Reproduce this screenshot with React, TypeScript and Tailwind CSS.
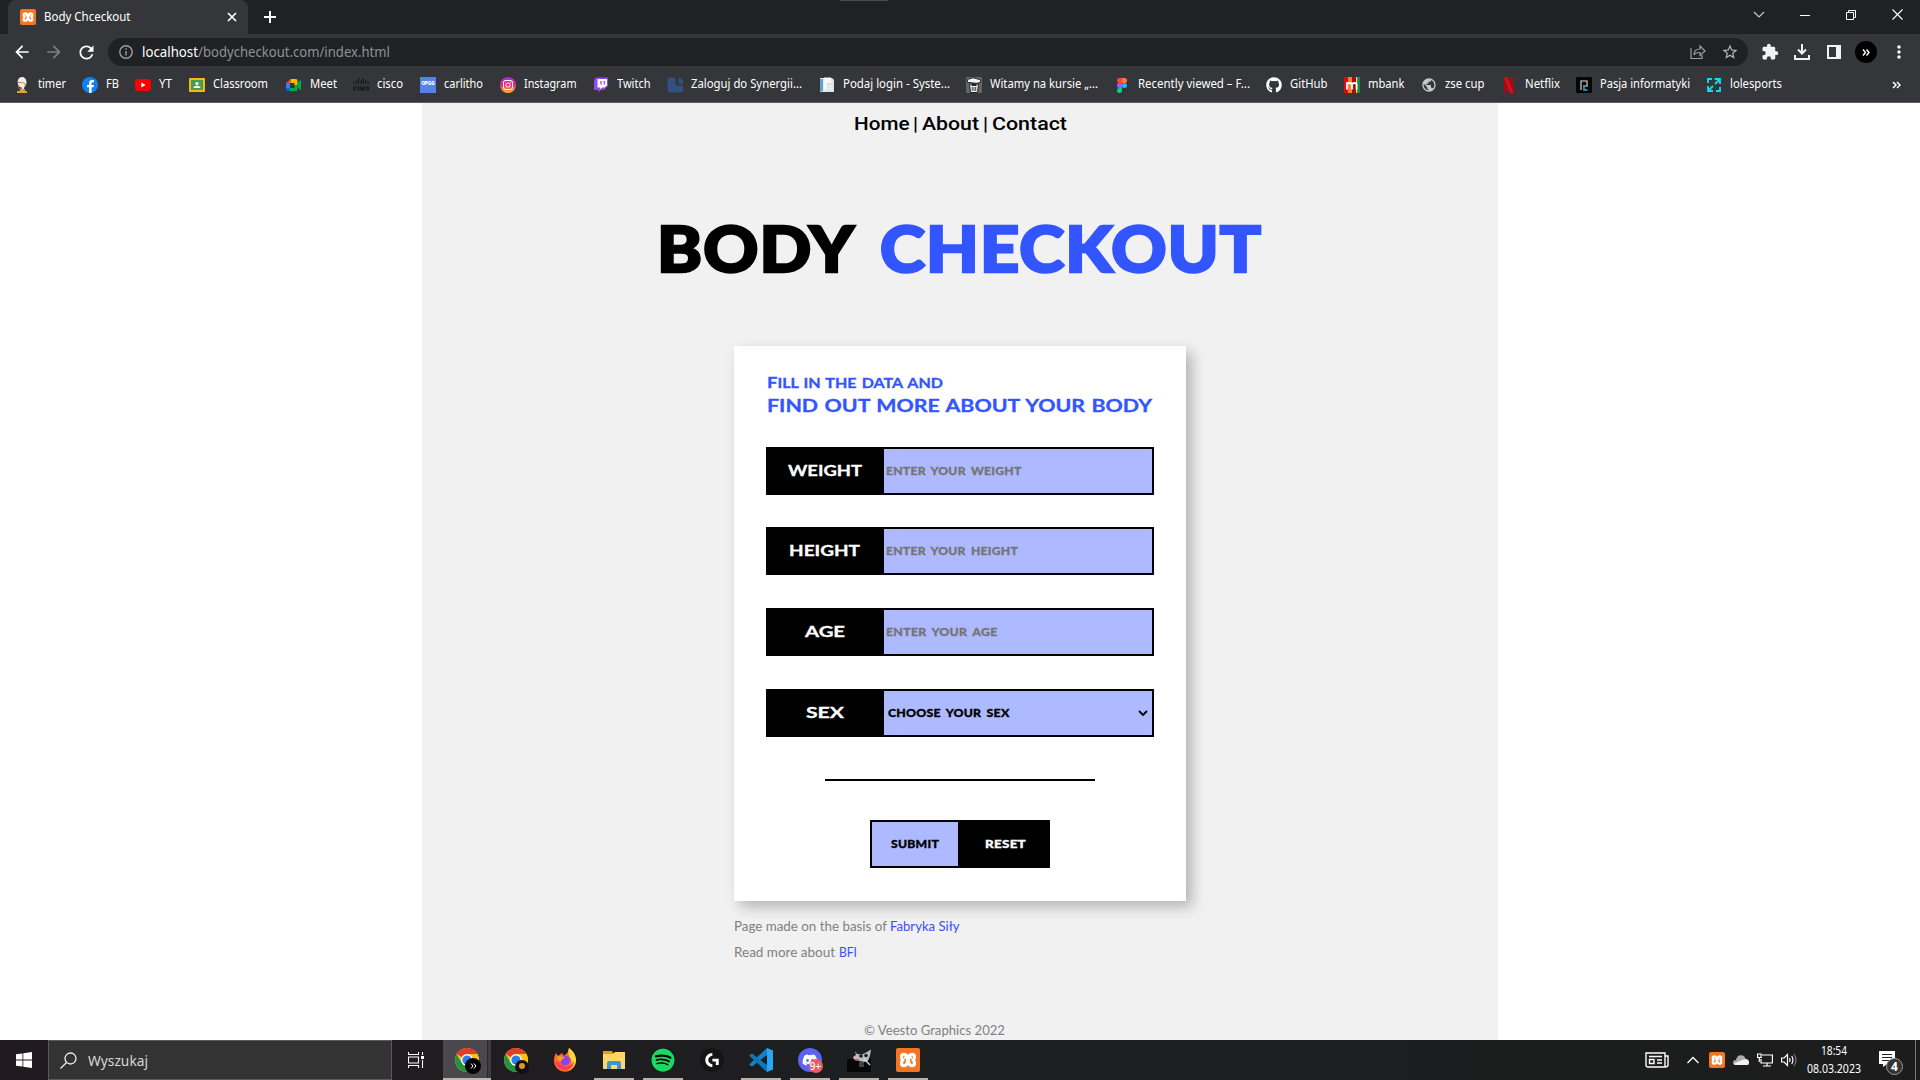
import { useLayoutEffect, useRef, useState, type ReactNode } from "react";
import { SiLogitechg, SiInstagram } from "react-icons/si";
import { FaSpotify, FaDiscord, FaGithub, FaFacebookF } from "react-icons/fa";
import { MdExtension, MdPublic, MdStarBorder, MdRefresh, MdArrowBack, MdArrowForward, MdMoreVert } from "react-icons/md";

/* Single line of text stretched to an exact width. */
function Fit({ w, className = "", children }: { w: number; className?: string; children: ReactNode }) {
  const ref = useRef<HTMLSpanElement>(null);
  const [scale, setScale] = useState(1);
  useLayoutEffect(() => {
    if (ref.current) setScale(w / (ref.current.getBoundingClientRect().width || w));
  }, []);
  return (
    <span className={`inline-block shrink-0 whitespace-pre text-left ${className}`} style={{ width: w }}>
      <span ref={ref} className="inline-block origin-left" style={{ transform: `scaleX(${scale})` }}>
        {children}
      </span>
    </span>
  );
}

const UI = "font-['Noto_Sans','Open_Sans',sans-serif]";
const HEAVY = "font-['Lato',sans-serif] font-black";
const PLATE = "font-['Lato',sans-serif] font-bold [word-spacing:1px] [-webkit-text-stroke:0.3px]";
const FIELD = "text-[11.500px] tracking-[0.2px] [word-spacing:2px] [-webkit-text-stroke:0.3px]";

function Xampp({ size }: { size: number }) {
  return (
    <span className="flex items-center justify-center rounded-[2px] bg-[#f37623]" style={{ width: size, height: size }}>
      <svg viewBox="0 0 24 24" width={size} height={size} fill="none" stroke="#fff" strokeWidth="3.200" strokeLinejoin="round" strokeLinecap="round">
        <path d="M10 9.500h-.5M14 9.500h.5M12 12 10.600 8Q10 6.300 8 6.300 5.500 6.300 5.500 9 5.500 11 7 12 5.500 13 5.500 15 5.500 17.700 8 17.700 10 17.700 10.600 16L13.400 8Q14 6.300 16 6.300 18.500 6.300 18.500 9 18.500 11 17 12 18.500 13 18.500 15 18.500 17.700 16 17.700 14 17.700 13.400 16Z" />
      </svg>
    </span>
  );
}

function Chrome() {
  return (
    <svg viewBox="0 0 24 24" width="24" height="24">
      <circle cx="12" cy="12" r="12" fill="#fbc116" />
      <path d="M12 12 L1.610 6 A12 12 0 0 1 22.400 6 L12 6Z" fill="#e33b2e" />
      <path d="M1.610 6 A12 12 0 0 0 12 24 L17.200 15 L6.800 15Z" fill="#229342" />
      <path d="M12 6.500H22.600A12 12 0 0 1 12 24L17.200 15Z" fill="#fbc116" />
      <circle cx="12" cy="12" r="5.900" fill="#fff" />
      <circle cx="12" cy="12" r="4.600" fill="#2b7de9" />
    </svg>
  );
}

function Figma() {
  return (
    <svg viewBox="0 0 16 16" width="16" height="16">
      <path d="M8 1H5.500a2.500 2.500 0 0 0 0 5H8Z" fill="#f24e1e" />
      <path d="M8 1h2.500a2.500 2.500 0 0 1 0 5H8Z" fill="#ff7262" />
      <path d="M8 6H5.500a2.500 2.500 0 0 0 0 5H8Z" fill="#a259ff" />
      <circle cx="10.500" cy="8.500" r="2.500" fill="#1abcfe" />
      <path d="M8 11H5.500A2.500 2.500 0 1 0 8 13.500Z" fill="#0acf83" />
    </svg>
  );
}

const S = ({ children }: { children: ReactNode }) => (
  <svg viewBox="0 0 16 16" width="16" height="16" fill="none">{children}</svg>
);

/* icon, label, label width, width of the space up to the next icon */
const bookmarks: [ReactNode, string, number, number][] = [
  [<S><path d="M8 0C5 0 3.500 3 3.700 5.500S5 10.500 7.500 10.500s5-2 5-5S11 0 8 0Z" fill="#f3ede2" /><path d="M4 5c2 1.500 6 0 7 2s-1 5-3.500 5-4-1-3-3" stroke="#a5793a" strokeWidth="1" /><path d="M7 6.500 9.500 8 8.500 13" stroke="#f6efe2" strokeWidth="2" /><path d="M6 13h5M3 15h10" stroke="#e3a02c" strokeWidth="1.800" /></S>, "timer", 28, 16],
  [<span className="flex h-4 w-4 items-end justify-center overflow-hidden rounded-full bg-[#1081f5] text-white"><FaFacebookF size={13} /></span>, "FB", 13, 16],
  [<S><rect y="2" width="16" height="12" rx="3" fill="#f00" /><path d="m6.300 5.500 4.400 2.500-4.400 2.500Z" fill="#fff" /></S>, "YT", 13, 17],
  [<S><rect y="1" width="16" height="14" rx="1" fill="#f4b913" /><rect x="2" y="3" width="12" height="10" fill="#4b9b52" /><circle cx="8" cy="6.500" r="1.600" fill="#fff" /><path d="M4.500 11c0-3 7-3 7 0Z" fill="#fff" /></S>, "Classroom", 55, 18],
  [<S><path d="M0 6 4.500 2v4Z" fill="#ea4335" /><path d="M0 6h4v5H0Z" fill="#2684fc" /><path d="M0 11h4v3H1.500Q0 14 0 12.500Z" fill="#0066da" /><path d="M4.500 2H10q1.500 0 1.500 1.500V8H8.500V6h-4Z" fill="#ffba00" /><path d="M4 11h4.500V8h3v4.500q0 1.500-1.500 1.500H4Z" fill="#00ac47" /><path d="m11.500 5.500 3.500-2.800v10.600l-3.500-2.800Z" fill="#00ac47" /></S>, "Meet", 27, 16],
  [<S><path d="M1 4.500v2M3.300 3v3.500M5.600 1v6M8 3v3.500M10.300 1v6M12.600 3v3.500M15 4.500v2" stroke="#151617" strokeWidth="1.100" /><path d="M3.500 10H1v3h2.500M5 9v4.500M9 10H7v1.500h2V13H6.500M12 10h-1.500v3H12M13.500 10H15.500v3h-2Z" stroke="#151617" strokeWidth="1.200" /></S>, "cisco", 26, 17],
  [<span className="flex h-4 w-4 items-center justify-center bg-[#5383e8] font-['Inter',sans-serif] text-[4.500px] leading-none font-black text-white">OPGG</span>, "carlitho", 39, 17],
  [<span className="flex h-4 w-4 items-center justify-center rounded-full bg-linear-to-b from-[#9a20d8] via-[#f01e6a] to-[#ffb31a] text-white"><SiInstagram size={10} /></span>, "Instagram", 52.5, 16.5],
  [<S><path d="M3 .5h12v8.500l-4 4H8L5.500 15.500V13H1V3Z" fill="#9146ff" /><path d="M4.500 2H14v6.500l-2.300 2H9L7 12.300v-1.800H4.500Z" fill="#fff" /><path d="M8 4v3.500M11.300 4v3.500" stroke="#9146ff" strokeWidth="1.300" /></S>, "Twitch", 33.5, 16.5],
  [<S><path d="M2 .5h5q1.500 0 1.500 1.500v5q0 1.500 1.500 1.500h6V13q0 2.500-2.500 2.500H3Q.5 15.500.5 13V2Z" fill="#34507f" /><path d="M11.500 1q4 0 4.500 3v3h-3q-1.500 0-1.500-1.500Z" fill="#34507f" /></S>, "Zaloguj do Synergii...", 111, 17],
  [<S><path d="M1 1h12l2 2v12H1Z" fill="#e4e9ec" /><path d="M1 2h3v12.500H1Z" fill="#5ba3d2" /><path d="M5 .5h7v12H5Z" fill="#f7f7f7" /><path d="M8 6h7v9H8Z" fill="#dadfe2" /><path d="M9 9h5M9 12h5" stroke="#fff" /></S>, "Podaj login - Syste...", 107, 16],
  [<S><rect width="16" height="16" rx="1" fill="#666" /><path d="M1.500 2.500 7 .8l7.500 2v2.500l-4 1-9-1Z" fill="#f2f2f2" stroke="#111" strokeWidth=".8" /><path d="m3.500 7 1 8.500h7l1-8.500Z" fill="#eee" stroke="#222" /><path d="M5.500 7h5v2h-5Z" fill="#222" /><path d="M6.300 10v4M8 10v4M9.700 10v4" stroke="#222" strokeWidth=".8" /></S>, "Witamy na kursie „...", 108, 16],
  [<Figma />, "Recently viewed – F...", 112, 16],
  [<FaGithub size={16} color="#fff" />, "GitHub", 37.5, 16.5],
  [<S><rect width="16" height="16" fill="#e30613" /><path d="M4 0h4v16H4Z" fill="#f58220" /><path d="M8 0h4v16H8Z" fill="#a80d14" /><path d="M12 0h1.500v16H12Z" fill="#e8d6b0" /><path d="M13.500 0H16v16h-2.500Z" fill="#0a8f3c" /><path d="M3 12.500V5M3 8q0-2 2.500-2T8 8v4.500M8 8q0-2 2.300-2t2.300 2v4.500" stroke="#fff" strokeWidth="1.800" /></S>, "mbank", 36.5, 16.5],
  [<MdPublic size={16} color="#c4c7cc" />, "zse cup", 39.5, 16.5],
  [<S><path d="M3 0h3.500v16H3ZM9 0h3.500v16H9Z" fill="#a50a12" /><path d="M3 0h3.500l6 16H9Z" fill="#e50914" /></S>, "Netflix", 35, 16],
  [<S><rect width="16" height="16" rx="1.500" fill="#050505" /><path d="M5 13V4h6v5H7" stroke="#9a9a9a" strokeWidth="1.700" /><path d="M8 9.500V13h3.500" stroke="#27b7dd" strokeWidth="1.500" /></S>, "Pasja informatyki", 90, 16],
  [<S><path d="M2 6V2h4M10 14h4v-4M2 9v5h5M8.500 2H14v5M14 2 9 7M2 14l5-5" stroke="#0be0f0" strokeWidth="1.800" /></S>, "lolesports", 52, 16],
];

function BrowserChrome() {
  return (
    <header className={`${UI} h-[103px] bg-[#35363a] text-white`}>
      <div className="flex h-[34px] items-stretch bg-[#202124]">
        <div className="ml-2 flex w-60 items-center rounded-t-lg bg-[#35363a] pl-3 pb-px">
          <Xampp size={16} />
          <Fit w={86.5} className="ml-2 text-[12px]">Body Chceckout</Fit>
          <svg className="ml-auto mr-[11px]" width="10" height="10" stroke="#fff" strokeWidth="1.700"><path d="m1 1 8 8M9 1 1 9" /></svg>
        </div>
        <svg className="mt-[11px] ml-4" width="12" height="12" stroke="#fff" strokeWidth="2"><path d="M6 0v12M0 6h12" /></svg>
        <div className="ml-[564px] h-px w-12 bg-[#4b4b4b]" />
        <div className="ml-auto flex items-center pr-[17px] pb-[5px]">
          <svg width="12" height="8" fill="none" stroke="#c8c8c8" strokeWidth="1.200"><path d="m1 1 5 5 5-5" /></svg>
          <svg className="ml-[35px]" width="10" height="10" stroke="#fff"><path d="M0 5.500h10" /></svg>
          <svg className="ml-9" width="10" height="10" fill="none" stroke="#fff"><path d="M.5 2.500h7v7h-7ZM2.500 2.500v-2h7v7h-2" /></svg>
          <svg className="ml-9" width="11" height="11" stroke="#fff" strokeWidth="1.100"><path d="m.5.5 10 10M10.500.5l-10 10" /></svg>
        </div>
      </div>
      <div className="flex h-9 items-center pl-3">
        <MdArrowBack size={20} className="shrink-0" />
        <MdArrowForward size={20} className="ml-3 shrink-0 text-[#7f8084]" />
        <MdRefresh size={21} className="ml-3 shrink-0" />
        <div className="ml-[11px] flex h-7 w-[1640px] items-center rounded-full bg-[#202124] pl-[11px]">
          <svg width="14" height="14" fill="none" stroke="#9aa0a6" strokeWidth="1.400"><circle cx="7" cy="7" r="6.200" /><path d="M7 6v4.500M7 3.300v1.500" /></svg>
          <Fit w={56} className="ml-[8.500px] pb-px text-[14px]">localhost</Fit>
          <Fit w={192} className="pb-px text-[14px] text-[#8f9296]">/bodycheckout.com/index.html</Fit>
          <svg className="ml-auto" width="16" height="16" fill="none" stroke="#9b9da0" strokeWidth="1.200"><path d="M1 4v10.500h11V11M4 11c0-4 2-6 6-6V2l5 5-5 4.500V8.500c-3 0-5 .5-6 2.500Z" /></svg>
          <MdStarBorder size={18} className="mr-[9px] ml-[15px] text-[#b4b6b9]" />
        </div>
        <MdExtension size={18} className="ml-[13px] text-[#f1f3f4]" />
        <svg className="ml-[14px]" width="18" height="18" fill="none" stroke="#f1f3f4" strokeWidth="2"><path d="M9 1v9M5 6.500l4 4 4-4M2 12v4h14v-4" /></svg>
        <svg className="ml-4" width="14" height="14"><path d="M0 0h14v14H0Z" fill="#f1f3f4" /><path d="M2 2h7v10H2Z" fill="#35363a" /></svg>
        <span className="ml-[14px] flex h-[22px] w-[22px] items-center justify-center rounded-full bg-black"><svg width="8" height="7" fill="none" stroke="#fff" strokeWidth="1.400"><path d="m1 .5 2.500 3L1 6.500M4.500.5 7 3.500l-2.500 3" /></svg></span>
        <MdMoreVert size={20} className="ml-[12px]" />
      </div>
      <div className="flex h-8 items-center pb-[3px] pl-[14px] text-[12px]">
        {bookmarks.map(([icon, label, w, gap]) => (
          <div key={label} className="flex shrink-0 items-center">
            <span className="mr-2 h-4 w-4 shrink-0">{icon}</span>
            <Fit w={w} className="pb-px">{label}</Fit>
            <span style={{ width: gap }} />
          </div>
        ))}
        <svg className="mr-[19px] ml-auto" width="9" height="8" fill="none" stroke="#fff" strokeWidth="1.500"><path d="m1 1 3 3-3 3M5 1l3 3-3 3" /></svg>
      </div>
      <div className="h-px bg-[#5f6063]" />
    </header>
  );
}

function Row({ label, lw, text, tw, select }: { label: string; lw: number; text: string; tw: number; select?: boolean }) {
  return (
    <div className="flex h-12 w-[388px] border-2 border-black bg-[#aebaff]">
      <div className="flex w-[116px] items-center justify-center bg-black pr-[3px] pb-px text-white">
        <Fit w={lw} className={`${PLATE} text-[15px]`}>{label}</Fit>
      </div>
      <div className={`flex flex-1 items-center justify-between pr-1 ${HEAVY} ${FIELD} ${select ? "pl-[3.500px] text-black" : "pl-[2px] text-[#757575]"}`}>
        <Fit w={tw}>{text}</Fit>
        {select && <svg width="10" height="7" fill="none" stroke="#000" strokeWidth="1.900"><path d="m1 1 4 4 4-4" /></svg>}
      </div>
    </div>
  );
}

function Page() {
  return (
    <main className="flex h-[937px] flex-col overflow-hidden bg-white">
      <div className="ml-[422px] flex h-full w-[1076px] flex-col items-center bg-[#f1f1f1]">
        <nav className="flex h-[42px] shrink-0 items-center font-['Roboto',sans-serif] text-[19px] font-medium text-black">
          <Fit w={55.5}>Home</Fit>
          <Fit w={5} className="mr-[4.500px] ml-[3.500px]">|</Fit>
          <Fit w={57}>About</Fit>
          <Fit w={5} className="mr-1 ml-[3.500px]">|</Fit>
          <Fit w={75}>Contact</Fit>
        </nav>
        <h1 className={`flex h-[201px] shrink-0 items-center gap-[25px] pt-1 pr-0.5 ${HEAVY} text-[62px] leading-none tracking-[1px] [-webkit-text-stroke:2.500px]`}>
          <Fit w={198} className="text-black">BODY</Fit>
          <Fit w={382} className="text-[#3355ff]">CHECKOUT</Fit>
        </h1>
        <section className="flex h-[555px] w-[452px] shrink-0 flex-col items-center bg-white shadow-[6px_6px_13px_rgba(0,0,0,0.25)]">
          <h2 className={`${PLATE} flex h-[101px] w-[386px] flex-col pt-[25px] text-[#3355ff]`}>
            <Fit w={176} className="h-[23px] text-[13px] leading-[23px]"><span className="text-[15px]">F</span>ILL IN THE DATA AND</Fit>
            <Fit w={385} className="h-6 text-[16.500px] leading-6">FIND OUT MORE ABOUT YOUR BODY</Fit>
          </h2>
          <div className="flex flex-col">
            <Row label="WEIGHT" lw={74} text="ENTER YOUR WEIGHT" tw={135.5} />
            <div className="h-8" />
            <Row label="HEIGHT" lw={71} text="ENTER YOUR HEIGHT" tw={132} />
            <div className="h-[33px]" />
            <Row label="AGE" lw={40} text="ENTER YOUR AGE" tw={111.5} />
            <div className="h-[33px]" />
            <Row label="SEX" lw={38} text="CHOOSE YOUR SEX" tw={121.5} select />
          </div>
          <div className="mt-[42px] h-0.5 w-[270px] shrink-0 bg-black" />
          <div className={`mt-[39px] flex h-12 w-[180px] shrink-0 border-2 border-black bg-[#aebaff] ${HEAVY} ${FIELD} text-black`}>
            <div className="flex w-[86px] items-center justify-center"><Fit w={48}>SUBMIT</Fit></div>
            <div className="flex flex-1 items-center justify-center bg-black pl-1 text-white"><Fit w={41}>RESET</Fit></div>
          </div>
        </section>
        <footer className="flex w-[452px] flex-1 flex-col pt-3 font-['Lato',sans-serif] text-[13.200px] leading-[26px] text-[#808080]">
          <p><Fit w={156}>Page made on the basis of </Fit><Fit w={69.5} className="text-[#3b4dff]">Fabryka Siły</Fit></p>
          <p><Fit w={104.5}>Read more about </Fit><Fit w={18} className="text-[#3b4dff]">BFI</Fit></p>
          <p className="mt-[52px] ml-[130px]"><Fit w={141}>© Veesto Graphics 2022</Fit></p>
        </footer>
      </div>
    </main>
  );
}

const apps: [ReactNode, boolean][] = [
  [<><Chrome /><span className="absolute right-[-1px] bottom-[-2px] flex h-3.5 w-3.5 justify-center rounded-full bg-[#111] pt-[3px]"><span className="block h-1.5 w-1.5 rounded-full bg-[#e8912d]" /></span></>, false],
  [<svg viewBox="0 0 24 24" width="24" height="24"><path d="M3 5 5 8 9 5l2 3 4-4 1-4c4 3 7 7 7 12.500A11 11 0 0 1 1 13C1 9 2 7 3 5Z" fill="#ff6a2b" /><path d="M16 0c4 3 7 7 7 12.500-.5 5-4 9-8 10 4-4 5-9 2-13-2-3-2-6-1-9.500Z" fill="#ffd93b" /><path d="M2 13c1 6 6 10 12 9 5-1 7-5 7-9-2 5-8 7-12 4Z" fill="#ff3d50" /><circle cx="12" cy="12.500" r="5" fill="#8a44e8" /><path d="M4 9c3-2 5 0 8 0-1 2-4 2-4 5-3-1-4-3-4-5Z" fill="#ff9a1f" /></svg>, false],
  [<svg viewBox="0 0 24 24" width="24" height="24"><path d="M1 3h9l1 2h12v16H1Z" fill="#e2a208" /><path d="M1 6h10l2-2h10v17H1Z" fill="#ffd767" /><path d="M5 21v-6q0-2 2-2h10q2 0 2 2v6h-4v-4H9v4Z" fill="#3b93d8" /></svg>, true],
  [<span className="h-6 w-6 rounded-full bg-black"><FaSpotify size={24} color="#1ed760" /></span>, true],
  [<span className="flex h-6 w-6 items-center justify-center rounded-full bg-[#151515]"><SiLogitechg size={14} color="#fff" /></span>, false],
  [<svg viewBox="0 0 24 24" width="24" height="24"><path d="m18 0 6 2.500v19L18 24Z" fill="#29a8f2" /><path d="M18 0v7L3 18.500 0 16.500Z" fill="#1582c8" /><path d="M18 24v-7L3 5.500 0 7.500Z" fill="#0e78bd" /></svg>, true],
  [<><span className="flex h-6 w-6 items-center justify-center rounded-full bg-[#5865f2]"><FaDiscord size={16} color="#fff" /></span><span className="absolute right-[-1px] bottom-[-1px] flex h-3.5 w-3.5 items-center justify-center rounded-full bg-[#ee5a5f] text-[10px] leading-none font-medium text-white">9+</span></>, true],
  [<svg viewBox="0 0 24 24" width="24" height="24"><path d="M0 11h24v13H0Z" fill="#070707" /><path d="M8 3l2 3 5 .5L20 4l4-2.500-1 6L21 13l-4 1-5-1-5-1.500L6 9l3-2Z" fill="#bcbcbc" /><circle cx="14" cy="8" r="1.800" fill="#222" /><circle cx="19" cy="7.500" r="1.800" fill="#222" /><path d="M8 12h4" stroke="#d94a3a" strokeWidth="1.500" /><path d="m17 11 6 6" stroke="#ddd" strokeWidth="1.300" /><path d="M12 14h5v5h-5Z" fill="#444" /></svg>, true],
  [<Xampp size={24} />, true],
];

function Taskbar() {
  return (
    <footer className={`${UI} flex h-10 items-stretch bg-linear-to-r from-[#211b20] via-[#1d1f20] via-50% to-[#1c1c1c] text-white`}>
      <div className="flex w-12 items-center justify-center">
        <svg width="16" height="16" fill="#fff"><path d="M0 2.300 6.500 1.400v6.100H0ZM7.300 1.300 16 0v7.500H7.300ZM0 8.400h6.500v6.200L0 13.700ZM7.300 8.400H16V16l-8.700-1.200Z" /></svg>
      </div>
      <div className="flex w-[344px] items-center border border-[#5a5a5a] bg-[#333] pl-[11px]">
        <svg width="17" height="17" fill="none" stroke="#eee" strokeWidth="1.300"><circle cx="10.500" cy="6.500" r="5.500" /><path d="M6.500 10.500.5 16.500" /></svg>
        <Fit w={60} className="ml-[11px] text-[15px] text-[#d8d8d8]">Wyszukaj</Fit>
      </div>
      <div className="flex w-[51px] items-center pl-4">
        <svg width="16" height="16" fill="none" stroke="#fff" strokeWidth="1.100"><path d="M.5 0v2.500h10V0M.5 16v-2.500h10V16M.5 5h10v6H.5ZM14.500 0v3M14.500 8v8" /><path d="M13 4h3v3h-3Z" fill="#fff" stroke="none" /></svg>
      </div>
      <div className="flex w-12 border-b-2 border-[#bdb6b3] bg-[#4b484d]">
        <div className="relative flex w-11 items-center pl-3">
          <span className="pt-0.5"><Chrome /></span>
          <span className="absolute top-[18px] left-[22px] flex h-4 w-4 items-center justify-center rounded-full bg-black"><svg width="7" height="6" fill="none" stroke="#fff"><path d="m1 .5 2 2.500-2 2.500M4 .5 6 3 4 5.500" /></svg></span>
        </div>
        <div className="w-1 border-l border-[#2a282c] bg-[#3e3c41]" />
      </div>
      <div className="flex">
        {apps.map(([icon, open], i) => (
          <div key={i} className="flex w-[49px] justify-center">
            <div className={`flex w-10 items-center justify-center border-b-2 pt-0.5 ${open ? "border-[#b8b2af]" : "border-transparent"}`}>
              <span className="relative flex h-6 w-6">{icon}</span>
            </div>
          </div>
        ))}
      </div>
      <div className="ml-auto flex items-center">
        <svg width="24" height="16" fill="none" stroke="#fff" strokeWidth="1.400"><path d="M1 1h19v14H3q-2 0-2-2ZM20 4h3v9q0 2-3 2M4 4.500h13M12 8h5M12 11h5M4.500 7.500h4.500v4H4.500Z" /></svg>
        <svg className="ml-[18px]" width="12" height="8" fill="none" stroke="#fff" strokeWidth="1.300"><path d="m.5 7 5.500-5.500L11.500 7" /></svg>
        <span className="ml-[10px]"><Xampp size={16} /></span>
        <svg className="ml-2" width="16" height="12"><path d="M3 11Q0 11 0 8.500T3 6Q4 1 8 1.200T12.500 5Q16 5.500 16 8.500T13 11Z" fill="#ababab" /><path d="M3 11Q1 11 1 9.500L9 6l4-1q3 .5 3 3.500T13 11Z" fill="#f1f1f1" /></svg>
        <svg className="ml-2" width="16" height="14" fill="none" stroke="#fff" strokeWidth="1.200"><path d="M5 2h10.400v8H4V6M10 10v3M6 13h8M.6 1h3.500v3.500H.6ZM2.300 4.500V9" /></svg>
        <svg className="ml-2" width="16" height="14" fill="none" stroke="#fff" strokeWidth="1.200"><path d="M.6 5h2.500L6.500 1.500v11L3.100 9H.6ZM8.500 5q1.300 2 0 4M10.700 3q2.500 4 0 8" /><path d="M13 1q4 6 0 12" stroke="#777" /></svg>
        <div className="ml-[10px] flex flex-col items-center text-[12px] leading-[18px]">
          <Fit w={26}>18:54</Fit>
          <Fit w={54}>08.03.2023</Fit>
        </div>
        <div className="relative ml-[18px] h-[18px] w-6">
          <svg width="16" height="16"><path d="M0 0h16v13H8l-4 3v-3H0Z" fill="#fff" /><path d="M3 3.500h10M3 6.500h10M3 9.500h7" stroke="#222" /></svg>
          <span className="absolute top-[7px] left-[7px] flex h-[17px] w-[17px] items-center justify-center rounded-full border border-[#999] bg-[#333] text-[12px] leading-none font-bold">4</span>
        </div>
        <div className="ml-3 h-10 w-px bg-[#777]" />
        <div className="w-1" />
      </div>
    </footer>
  );
}

export default function App() {
  return (
    <div className="h-[1080px] w-[1920px] overflow-hidden">
      <BrowserChrome />
      <Page />
      <Taskbar />
    </div>
  );
}
